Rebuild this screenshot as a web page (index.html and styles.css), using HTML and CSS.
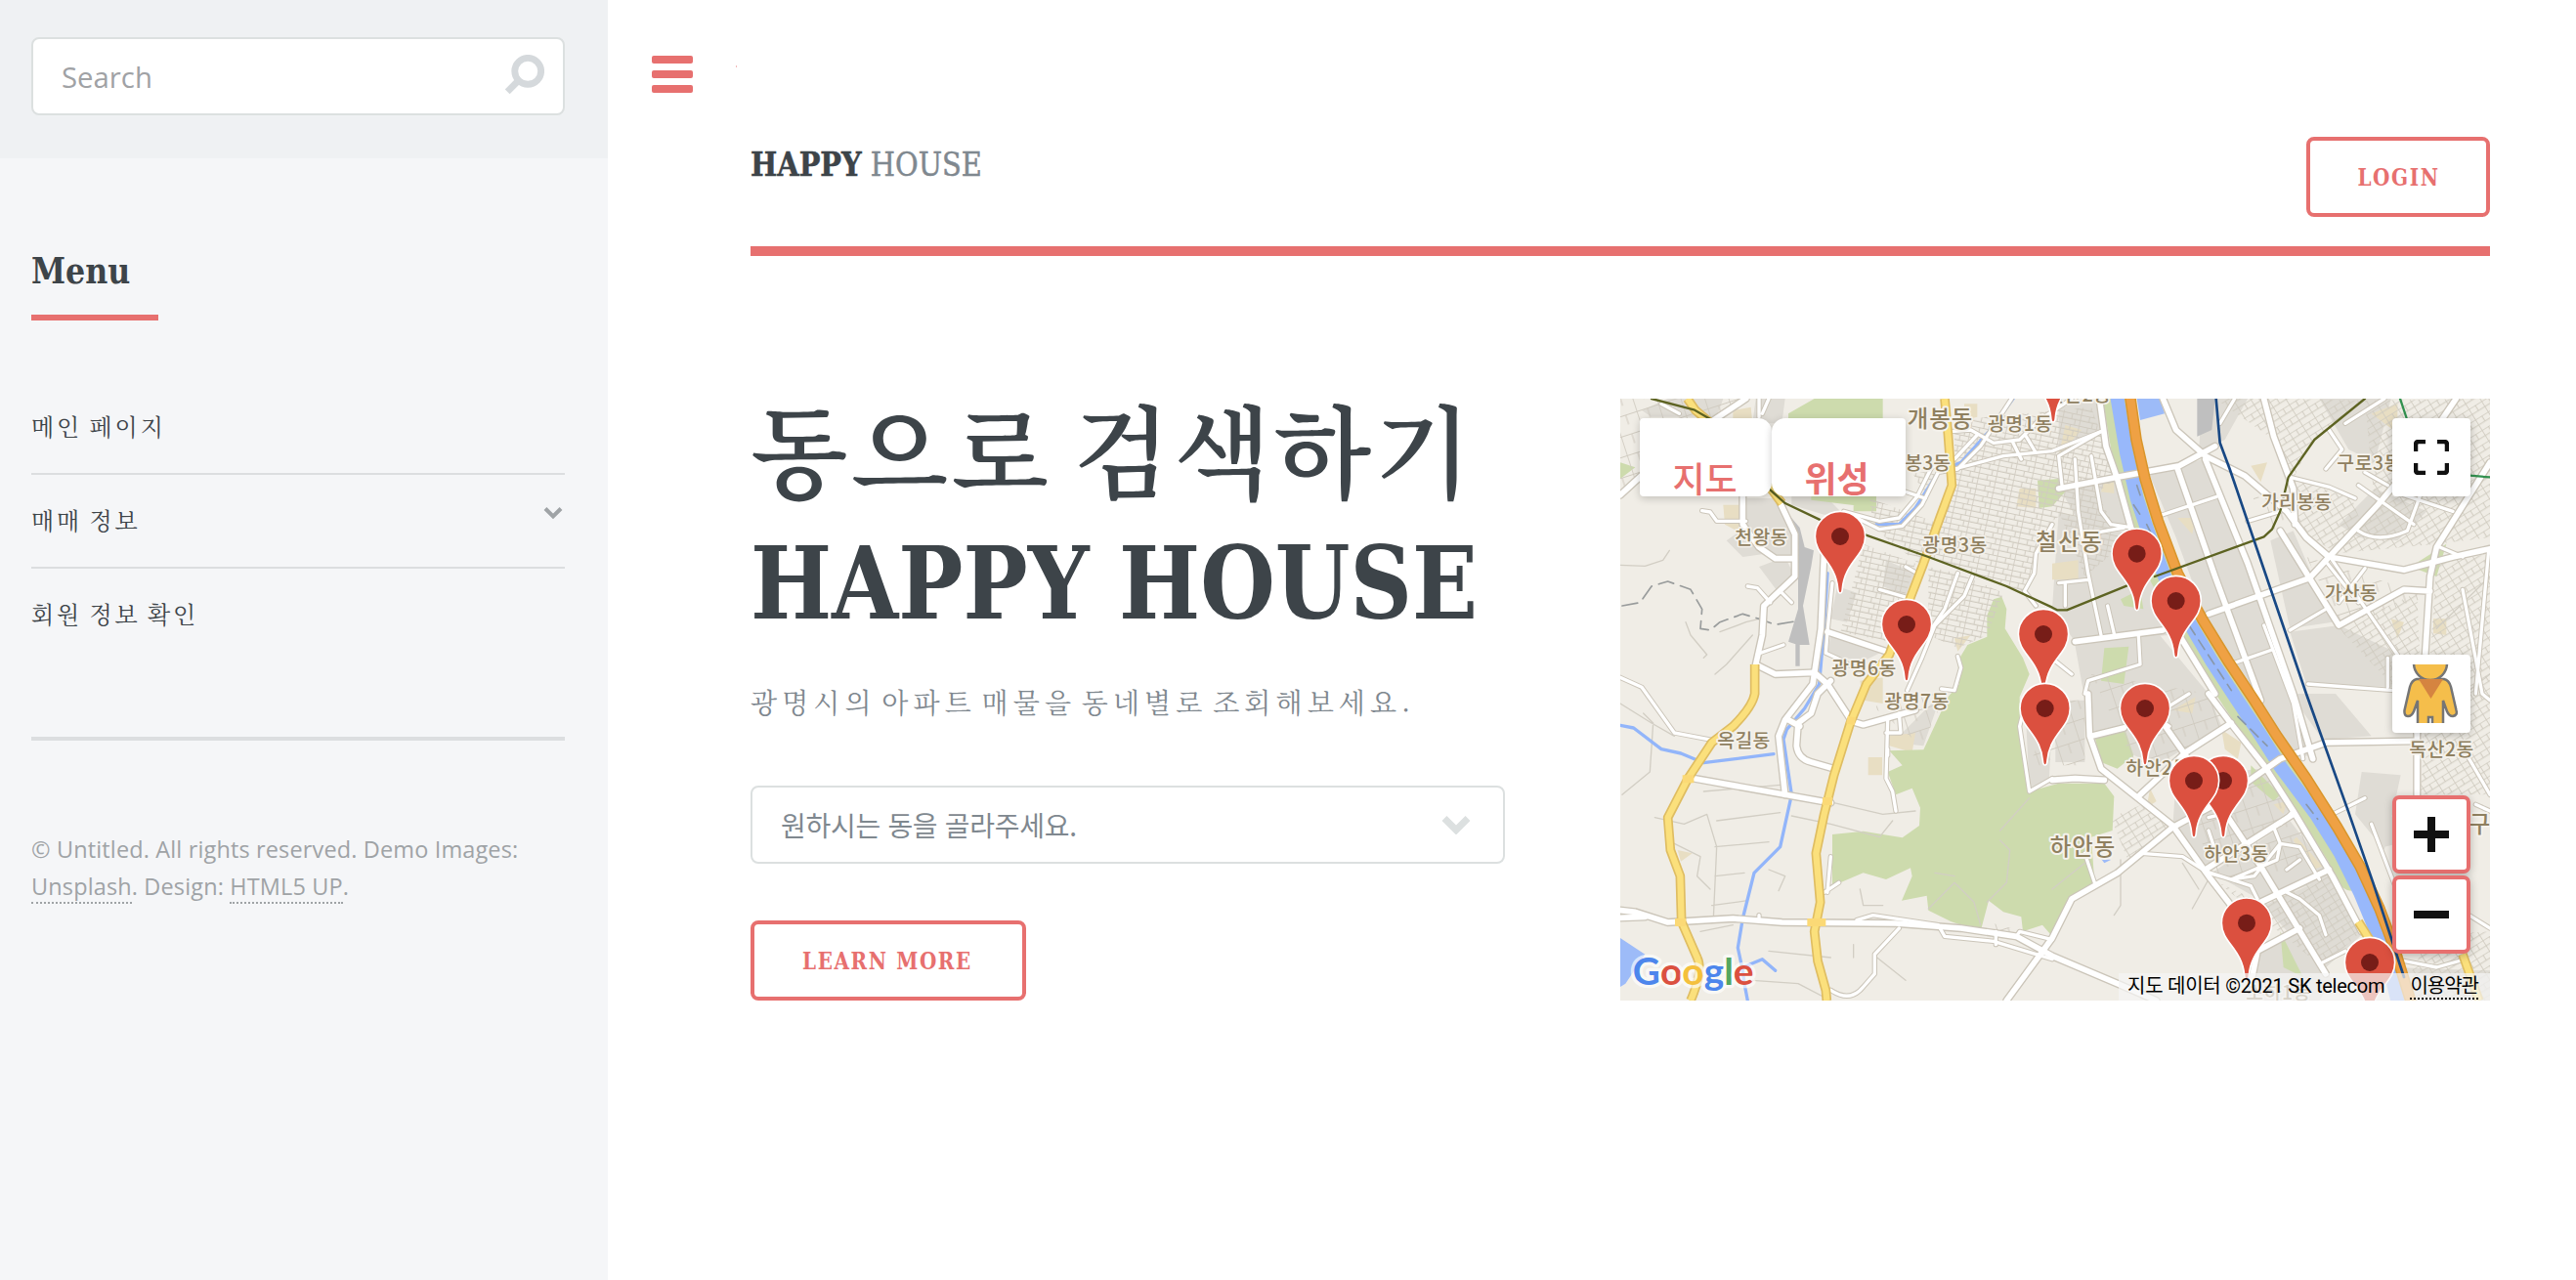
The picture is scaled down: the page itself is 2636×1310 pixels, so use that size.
FILE: index.html
```html
<!DOCTYPE html>
<html lang="ko">
<head>
<meta charset="utf-8">
<title>HAPPY HOUSE</title>
<link rel="stylesheet" href="styles.css">
</head>
<body>
<aside class="sidebar">
  <section class="search">
    <div class="search-box">
      <span>Search</span>
      <svg class="search-icon" viewBox="0 0 40 40"><circle cx="24" cy="16" r="12.8"/><path d="M15 25 4 36"/></svg>
    </div>
  </section>
  <nav class="menu">
    <h2><span class="fit fit-menu">Menu</span></h2>
    <ul>
      <li>메인 페이지</li>
      <li>매매 정보<svg class="chevron" viewBox="0 0 20 13"><path d="M2 2l8 8 8-8"/></svg></li>
      <li>회원 정보 확인</li>
    </ul>
  </nav>
  <footer>© Untitled. All rights reserved. Demo Images: <a>Unsplash</a>. Design: <a>HTML5 UP</a>.</footer>
</aside>
<main class="main">
  <div class="toggle"><i></i><i></i><i></i></div>
  <span class="speck"></span>
  <header class="header">
    <div class="logo"><span class="fit fit-logo"><strong>HAPPY</strong> HOUSE</span></div>
    <a class="button login"><span class="fit">LOGIN</span></a>
  </header>
  <section class="banner">
    <div class="content">
      <h1><span class="title-ko">동으로 검색하기</span><span class="fit title-en">HAPPY HOUSE</span></h1>
      <p>광명시의 아파트 매물을 동네별로 조회해보세요.</p>
      <div class="select"><span>원하시는 동을 골라주세요.</span><svg class="select-arrow" viewBox="0 0 30 20"><path d="M3 3.500l12 12 12-12"/></svg></div>
      <a class="button learn"><span class="fit">LEARN MORE</span></a>
    </div>
    <div class="map">
      <svg class="map-art" viewBox="54 54 2670 1848" preserveAspectRatio="none">
        <defs>
          <pattern id="streets-a" width="54" height="34" patternUnits="userSpaceOnUse" patternTransform="rotate(12)"><path d="M0 1H54M1 0V34M28 0V17M40 17V34M0 18H54"/></pattern>
          <pattern id="streets-b" width="46" height="38" patternUnits="userSpaceOnUse" patternTransform="rotate(-32)"><path d="M0 1H46M1 0V38M24 0V20M0 20H46"/></pattern>
          <pattern id="streets-c" width="70" height="60" patternUnits="userSpaceOnUse" patternTransform="rotate(-18)"><path d="M0 1H70M1 0V60M35 0V30"/></pattern>
          <g id="roads-major">
            <path d="M54 350 130 280 250 180 440 54M430 350V440L480 510 530 545H590M545 375 590 470V600L495 690 490 780 470 870 530 900 650 895 690 930 765 1045 800 1055 960 1010"/>
            <path d="M680 520 670 760 645 930 560 1040 540 1090 560 1270M690 770 870 830M600 1050 640 1020 660 960 700 920M600 1050 595 1120 Q600 1160 640 1170L710 1190M570 1040 605 1060"/>
            <path d="M280 1220 560 1270 700 1295M54 1625 100 1630 200 1662 400 1650 550 1662 900 1665 1100 1680 1270 1705 1380 1765 1580 1850 1700 1902M1240 1902 1380 1710 1440 1590 1580 1510 1750 1370 1880 1300 2080 1160 2220 1110 2500 1105M54 1648 130 1645"/>
            <path d="M1490 960 1495 1090 1530 1190 1750 1365 1860 1520 1960 1650 1980 1760M1720 1050 1860 1250 2020 1490 2220 1820M1860 960 1920 1040 2030 1180 2120 1320 2240 1520 2330 1690M1380 1225 1450 1220 1540 1225M1500 1090 1600 1065M1650 1270 1790 1140 1930 1050"/>
            <path d="M1850 1500 2120 1330M2020 1600 2230 1500M1950 1690 1990 1750M1990 1850 2010 1750 2140 1680M2500 1080 2500 1270"/>
            <path d="M1525 54 1545 200 1580 300 1630 480M1400 330 1580 295 1770 260 1880 200M1720 54 1760 150 1850 230 1970 290 2100 400 2160 480 2230 540 2460 580 2610 540 2724 515M2030 54 2060 170 2120 330 2125 440"/>
            <path d="M1850 240 1980 560 2120 960 2180 1160M1765 270 1880 600 2020 980M1860 715 2170 605 2230 540 2380 380 2480 260 2620 54M2080 460 2260 750 2460 640 2540 645M2560 510 2540 600 2525 840 2500 1080M2560 510 2724 250M1450 800 1720 765M1770 780 1880 960"/>
          </g>
          <g id="roads-minor">
            <path d="M305 398 330 402 350 430H440M705 620 690 770 685 835 740 860 800 900M445 630 475 635 515 680M550 650 580 680M475 838 555 810M930 570 965 590M850 640 935 665"/>
            <path d="M760 410 850 455 920 445 980 380 1030 280 1090 270 1160 200 1255 54M740 400 850 430 910 420 965 355 1010 265 1080 240 1150 165M1080 270 1230 230 1380 215 1530 155M1070 155 1130 150 1200 190 1280 180 1340 120 1440 54M1260 190 1285 240M1300 170 1330 220"/>
            <path d="M1380 440 1330 530 1325 590 1295 645 1330 690M1090 590 1050 700 1010 760M1135 600 1110 660 1020 750 980 850 935 950M54 910 120 940 220 1080 340 1103M1090 845 1100 880 1080 950 1040 945M875 1040 870 1220 890 1260 900 1320M910 1020 915 1080H870M875 1130V1150"/>
            <path d="M700 1460 690 1570M680 1570 725 1540M700 1870Q760 1910 800 1860L835 1820V1760L910 1680M780 1655 830 1640 1030 1670 1050 1705 1200 1720 1380 1775M1207 1690V1730M1270 1705 1280 1690 1380 1715M480 1640V1655M1300 980 1280 1060 1310 1260 1380 1220M930 340 990 360M480 54V110M490 100 510 54M290 180 315 200M180 70 235 100"/>
            <path d="M1655 1450 1780 1460 1850 1505 1990 1550 2010 1590M1860 1510 1930 1530 2000 1520 2080 1420 2140 1430 2200 1530M2060 1370 2080 1420 2070 1470 1930 1530M1860 1380 1880 1440M1480 1450 1510 1540M2100 1570 2140 1590 2200 1640 2220 1700M2200 1790 2280 1750M1860 1340 1900 1330"/>
            <path d="M1400 230 1530 155M1400 230 1410 320M1450 240 1460 400 1490 590M1500 230 1530 400 1560 440M1490 590 1530 780M1400 620 1490 610M1420 620V690M1560 440 1625 450M1645 780 1650 870 1490 920 1480 960M1390 860 1440 900M1550 690 1570 775M1490 470 1600 450"/>
            <path d="M1720 410 1885 355M1940 865 2055 825M2110 765 2220 700M1980 430 2080 400M2110 295 2230 325 2310 360M2320 460Q2380 500 2470 460L2510 350M2320 320 2490 440M2225 560 2320 680M2240 550 2440 840M2260 680 2340 575M2165 930 2430 950M1940 54 1895 130M2230 150 2270 210 2220 270M2340 280 2410 320M2030 750 2120 990 2150 1160M2280 130 2400 54M2430 340 2610 400M2570 510 2640 540M2410 850V940M2640 640 2700 960 2724 980M2660 1160 2724 1270M2720 520 2700 740 2680 960"/>
            <path d="M2340 1280 2280 1310 2240 1330M2360 1360 2440 1570M2660 1640 2724 1680M2460 1780 2560 1800 2630 1780M2680 1300 2724 1320M2080 1360 2120 1320M1800 960 1720 1010M1710 1040 1740 1060M2100 1500 2140 1470"/>
          </g>
          <g id="roads-yellow">
            <path d="M260 54 285 90 345 140 520 335 550 375M1050 54 1060 160 1072 320 1035 420 985 560 935 690 880 840 810 930 785 990 760 1050 710 1210 680 1330 655 1450 668 1600 650 1690 660 1780 685 1870 688 1902"/>
            <path d="M467 870V960Q460 1000 400 1060L335 1110 262 1220 200 1340 208 1440 238 1520 242 1660 290 1770Q310 1810 270 1902M2640 1760 2690 1902M2320 1660 2370 1740"/>
          </g>
          <g id="pin"><path d="M0 174Q-6 174-7 160C-14 78-77 60-77 0A77 77 0 0 1 77 0C77 60 14 78 7 160Q6 174 0 174Z"/><circle r="27"/></g>
        </defs>
        <rect class="land" x="54" y="54" width="2670" height="1848"/>
        <g class="urban">
          <path d="M120 90 200 54H370L350 110H150ZM470 54H560L550 130H460ZM430 360H540L590 480V560L520 530 440 440ZM480 570 560 540 590 600 540 650ZM380 490 450 440 500 530 430 540ZM870 550 960 590 930 660 860 630ZM720 630 780 650 750 740 700 730ZM700 780 860 830 800 860 690 840ZM580 340 700 370 740 410H680L580 380Z"/>
          <path d="M1400 400 1620 470 1700 600 1740 780 1450 800 1380 700ZM1450 810 1710 780 1860 960 1900 1060 1700 1180 1500 1090ZM1390 980H1480V1170H1390ZM1300 1050H1380L1370 1230 1310 1250ZM1680 290 1840 240 1990 560 2170 1150 2080 1160 1900 860 1760 480ZM2050 490 2120 460 2240 740 2110 760ZM2110 770 2260 750 2450 840 2430 940 2160 930ZM2200 54H2420L2370 250 2290 210ZM2260 440 2370 330 2530 400 2440 490 2320 480ZM2110 960H2250L2360 1090 2210 1100Z"/>
          <path d="M1760 1220 2020 1190 2110 1320 1850 1490 1750 1370ZM1870 1510 2110 1350 2240 1520 2030 1600 1960 1560ZM2030 1610 2230 1520 2330 1700 2210 1810ZM1990 1760 2150 1690 2240 1840 2200 1902H1980ZM2330 1200 2450 1210 2400 1440 2310 1330ZM2390 1340 2520 1330V1400L2400 1430ZM1000 1000 1040 960 985 1120 890 1110ZM1840 54H1980L1910 180 1830 220ZM2420 1800 2724 1810V1902H2480ZM1400 80 1530 54V150L1400 220ZM1410 340 1580 300 1620 440 1480 470Z"/>
        </g>
        <g class="campus"><path d="M400 90 455 80 460 130 400 130ZM370 380H430V470L375 440ZM1110 70H1150V110L1110 120ZM1280 330 1330 330V390L1270 385ZM1080 790 1130 780 1090 830ZM790 920 860 910V990L800 980ZM815 1155H858V1210H815ZM875 1090 960 1080 950 1140 880 1120ZM230 1440 275 1450 240 1475ZM1420 135 1470 150 1400 230ZM1540 310H1570V345L1530 340ZM1990 260 2040 250 2020 310ZM2360 100 2440 70V160ZM1765 420 1820 420 1810 470ZM1380 560 1460 550V610H1380ZM2420 730 2460 740 2440 790ZM2550 730H2590V780L2550 775ZM1900 1070 1960 1110 1950 1160 1910 1130ZM2130 1400 2210 1490 2180 1500 2120 1410ZM1680 1250 1700 1290 1670 1310ZM1750 1010 1820 970 1810 1020ZM2060 1300 2100 1290 2090 1330Z"/></g>
        <g class="parks">
          <path d="M1225 662 1240 700 1235 760 1290 850 1310 900 1280 970 1280 1080 1310 1260 1400 1235H1540L1570 1275 1565 1380 1500 1400 1510 1540 1440 1600 1380 1705 1350 1670 1290 1690 1285 1645 1230 1630 1185 1595 1160 1690 1070 1660 1000 1625 995 1580 918 1595 950 1520 945 1495 870 1530 800 1510 705 1550V1392L800 1382 920 1402 972 1365 975 1310 950 1250 900 1270 875 1200 920 1180 880 1135 985 1132 1060 970 1095 930 1090 860 1120 810 1180 785 1180 720 1200 670Z"/>
          <path d="M570 100 650 54H860V115H570ZM640 345H800V385L640 365ZM770 350H840V400H770ZM1335 305 1400 300 1420 340 1380 385 1340 390ZM54 250 100 265 54 300ZM1540 820 1615 815 1600 930 1530 920ZM1510 1090 1600 1060 1630 1150 1580 1190 1530 1170ZM1590 670 1650 640 1660 700 1600 690ZM1990 1180 2080 1270 2060 1290 1990 1230ZM2080 1690 2150 1830 2090 1800ZM2480 570 2590 500 2560 600Z"/>
        </g>
        <path class="hatch-a" d="M820 360 1040 440 970 560 830 450ZM1080 120 1500 80 1580 300 1380 430 1290 650 1000 540 1080 300ZM1000 570 1090 590 1230 650 1180 780 1090 820 1000 780ZM800 500 960 560 880 800 730 770ZM1440 200 1600 500 1480 600 1400 400ZM950 280 1030 280 990 350Z"/>
        <path class="hatch-b" d="M1880 54 2100 54 2340 60 2180 180 2120 300 2060 180ZM2120 300 2300 360 2330 440 2240 520 2140 460ZM2340 60 2724 54V480L2560 500 2240 530 2370 380ZM2260 760 2500 650 2520 1100 2430 940ZM2560 560 2724 530V1270L2510 1270ZM1560 1340 1680 1290 1740 1370 1620 1490ZM1890 1540 2210 1800 2340 1680 2230 1500 2020 1600ZM2540 1700 2724 1690V1902H2440Z"/>
        <path class="hatch-c" d="M54 54H430L54 340ZM830 1000 1060 950 980 1120ZM1390 980H1480V1180H1310ZM1500 900 1860 960 1930 1060 1650 1210ZM1780 1250 2080 1190 2210 1490 1880 1530ZM1990 340 2110 420 2040 470ZM2160 540 2540 660 2270 750ZM1180 1660 1290 1690 1270 1710 1180 1700Z"/>
        <g class="tracks">
          <path d="M54 565 130 568 185 550 205 520M255 740 270 780 320 840 310 850M360 770 440 740 480 730M345 900 380 870 460 780M54 990 150 1050 220 1090M125 1020 155 1050 145 1200 60 1270M160 1340 250 1360 320 1330 350 1430 340 1650M310 1260 545 1240M350 1350 545 1325M345 1430 510 1415M345 1520 435 1510M335 1610 445 1595M300 1690 400 1670M710 1295 860 1330 960 1320M580 1335 700 1360 850 1400 890 1350M510 1500 560 1520 540 1565M220 1420 300 1460 290 1520 330 1560M790 1560 800 1610 860 1610M510 1750 700 1770M770 1730V1770M830 1760 930 1840M1000 1620 1080 1540 1140 1600 1160 1670M1020 1510 1080 1520M1180 1600 1240 1540 1250 1440 1220 1410M1310 1280 1220 1380M460 1840 600 1850 700 1902M1590 1470V1610L1570 1640M1780 1480 1830 1560M1860 1530 1810 1620M1380 1560 1480 1480M2560 760 2724 600M2520 1060 2724 900"/>
        </g>
        <path class="trail" d="M60 690 115 680 150 630 200 615 270 640 305 700 300 760 330 765 360 740 430 715 480 730 530 748 590 738"/>
        <path class="yard" d="M550 385 605 450 620 510 648 520 640 570 615 690 635 810H605V875H592V808L570 800 600 700 600 500ZM1825 54H1880L1870 150 1825 170Z"/>
        <path class="stream" d="M54 1057 95 1065 180 1130 240 1143 310 1172 525 1145M690 590 680 750 665 930 620 1005 565 1070 555 1100 580 1270 545 1430 465 1510 430 1650 415 1740 430 1810 435 1850 445 1902M1260 54 1190 150 1100 250 1030 280 960 390 910 440 840 440M430 1800 490 1775 530 1810"/>
        <path class="lake" d="M54 1710 130 1760 70 1850 54 1860ZM1640 54H1710L1725 100 1650 120ZM1525 1460 1560 1470 1540 1480Z"/>
        <path class="bank" d="M1580 54 1608 220 1640 360 1680 480 1725 600 1800 740 1870 860 1945 975 2015 1080 2085 1190 2190 1330 2265 1450 2300 1520"/>
        <path class="river" d="M1580 54 1608 220 1640 360 1680 480 1725 600 1800 740 1870 860 1945 975 2015 1080 2085 1190 2190 1330 2265 1450 2325 1570 2375 1690 2420 1820 2440 1902"/>
        <path class="river-mark" d="M1640 320 1650 350M1630 380 1650 410M1670 440 1690 480M1800 750 1930 950M1950 1030 1990 1070 2040 1120M2160 1300 2195 1345"/>
        <use href="#roads-minor" class="minor-casing"/><use href="#roads-major" class="major-casing"/>
        <use href="#roads-minor" class="minor-fill"/><use href="#roads-major" class="major-fill"/>
        <use href="#roads-yellow" class="yellow-casing"/><use href="#roads-yellow" class="yellow-fill"/>
        <path class="crossing" d="M245 1222H280M222 1662H255M628 1662H685M675 1290H705M750 1040 775 1045"/>
        <g class="highway"><path id="highway" d="M1620 54 1638 180 1665 300 1705 430 1765 590 1840 730 1920 860 2000 980 2070 1090 2160 1220 2255 1370 2325 1490 2385 1620 2430 1740 2480 1902"/><use href="#highway" class="highway-fill"/></g>
        <path class="line-olive" d="M150 54 280 88 345 125 515 335 560 375 665 425 800 470 1000 540 1240 630 1380 695 1395 703H1425L1610 628M1695 600 2030 478 2055 455 2080 400 2105 295 2185 180 2340 54"/>
        <path class="line-navy" d="M1883 54 1895 190 1925 270 2160 960 2285 1310 2365 1540 2460 1830"/>
        <path class="line-green" d="M2448 54 2470 120 2530 260Q2560 285 2724 295"/>
        <g class="district">
          <text x="935" y="142" textLength="200">개봉동</text><text x="1330" y="520" textLength="202">철산동</text><text x="1373" y="1455" textLength="200">하안동</text><text x="2660" y="1387">구</text>
        </g>
        <g class="area">
          <text x="1182" y="152" textLength="198">광명1동</text><text x="928" y="272" textLength="140">봉3동</text><text x="406" y="500" textLength="162">천왕동</text><text x="982" y="525" textLength="198">광명3동</text><text x="703" y="903" textLength="198">광명6동</text><text x="865" y="1005" textLength="198">광명7동</text><text x="352" y="1125" textLength="162">옥길동</text><text x="2022" y="393" textLength="216">가리봉동</text><text x="2254" y="272" textLength="198">구로3동</text><text x="2216" y="671" textLength="162">가산동</text><text x="1606" y="1210" textLength="198">하안2동</text><text x="1846" y="1472" textLength="198">하안3동</text><text x="2476" y="1152" textLength="198">독산2동</text><text x="1362" y="62" textLength="198">철산2동</text><text x="1975" y="1900" textLength="198">소하1동</text>
        </g>
        <g class="pins">
          <use href="#pin" x="1383" y="-48"/><use href="#pin" x="729" y="477"/><use href="#pin" x="1640" y="530"/><use href="#pin" x="1760" y="675"/><use href="#pin" x="933" y="747"/><use href="#pin" x="1353" y="777"/><use href="#pin" x="1358" y="1005"/><use href="#pin" x="1665" y="1005"/><use href="#pin" x="1905" y="1227"/><use href="#pin" x="1815" y="1227"/><use href="#pin" x="1977" y="1664"/><use href="#pin" x="2355" y="1785"/>
        </g>
        <text class="google" x="92" y="1853" textLength="372" lengthAdjust="spacingAndGlyphs"><tspan class="g-blue">G</tspan><tspan class="g-red">o</tspan><tspan class="g-yellow">o</tspan><tspan class="g-blue">g</tspan><tspan class="g-green">l</tspan><tspan class="g-red">e</tspan></text>
      </svg>
      <div class="map-types"><div>지도</div><div class="satellite">위성</div></div>
      <div class="control fullscreen"><svg viewBox="0 0 36 36" width="36" height="36"><path d="M2 12V5Q2 2 5 2H12M24 2H31Q34 2 34 5V12M34 24V31Q34 34 31 34H24M12 34H5Q2 34 2 31V24"/></svg></div>
      <div class="control pegman"><svg viewBox="0 0 56 60" width="56" height="60"><path class="peg-body" d="M14 15Q9 16 7 23L1.500 47Q1 53 5 53Q9 53 11 48L15 37V62H26V54H30V62H41V37L45 48Q47 53 51 53Q56 52 54.500 47L49 23Q47 16 42 15Z"/><circle class="peg-body" cx="28" cy="-1" r="17"/><path class="peg-scarf" d="M16 15H41L28.500 35Z"/></svg></div>
      <div class="control zoom-in"><svg viewBox="0 0 36 36" width="36" height="36"><path class="bar" d="M0 18H36M18 0V36"/></svg></div>
      <div class="control zoom-out"><svg viewBox="0 0 36 36" width="36" height="36"><path class="bar" d="M0 18H36"/></svg></div>
      <div class="attribution"><span>지도 데이터 ©2021 SK telecom</span><a>이용약관</a></div>
    </div>
  </section>
</main>
</body>
</html>
```
FILE: styles.css
```css
* { box-sizing: border-box; }
body {
  margin: 0;
  display: flex;
  width: 2636px;
  height: 1310px;
  overflow: hidden;
  background: #fff;
  color: #7f888f;
  font: 29.33px/1.65 "Open Sans", "Noto Sans CJK KR", sans-serif;
}
ul { list-style: none; margin: 0; padding: 0; }
h1, h2, p { margin: 0; }
.fit { display: inline-block; transform: scaleX(.952); transform-origin: 0 50%; white-space: nowrap; }

.sidebar { width: 622px; flex: none; background: #f5f6f8; }
.search { height: 162px; padding: 38px 44px 0 32px; background: #eff1f3; }
.search-box {
  height: 80px;
  padding: 2px 19px 0 29px;
  display: flex;
  align-items: center;
  justify-content: space-between;
  border: 2px solid #dce0e0;
  border-radius: 8px;
  background: #fff;
  color: #a0a2a5;
}
.search-icon { width: 42px; height: 42px; margin-bottom: 5px; fill: none; stroke: #d5d9dc; stroke-width: 6.5; }
.menu { margin: 0 44px 0 32px; height: 596px; padding-top: 84px; border-bottom: 4px solid #dcdee0; }
.menu h2 {
  width: 130px;
  height: 82px;
  border-bottom: 6px solid #e7706f;
  color: #3d4449;
  font: bold 37px/62px "Roboto Slab", "DejaVu Serif Condensed", "DejaVu Serif", serif;
}
.menu ul { margin-top: 60px; }
.menu li {
  height: 96px;
  display: flex;
  justify-content: space-between;
  padding: 28px 2px 0 0;
  font: 400 24px/40px "Noto Serif CJK KR", "Noto Sans CJK KR", serif;
  letter-spacing: 2.9px;
  word-spacing: -3px;
  color: #3d4449;
}
.menu li + li { border-top: 2px solid #dcdee0; padding-top: 26px; }
.chevron { width: 20px; height: 18px; margin-top: 4px; fill: none; stroke: #9fa3a6; stroke-width: 4; }
.sidebar footer {
  margin: 92px 44px 0 32px;
  font-size: 23.47px;
  line-height: 38px;
  letter-spacing: .15px;
  color: #9fa3a6;
}
.sidebar footer a { border-bottom: 2px dotted #9fa3a6; display: inline-block; line-height: 32px; }

.main { flex: 1; position: relative; padding: 140px 88px 0 146px; }
.toggle { position: absolute; left: 45px; top: 57px; display: grid; gap: 7px; }
.toggle i { width: 42px; height: 8px; border-radius: 2px; background: #e7706f; }
.speck { position: absolute; left: 131px; top: 67px; width: 1px; height: 2px; background: #f3b9b9; }
.header { display: flex; justify-content: space-between; height: 122px; border-bottom: 10px solid #e7706f; }
.logo { padding-top: 2px; font: 33.7px/52px "Roboto Slab", "DejaVu Serif Condensed", "DejaVu Serif", serif; -webkit-text-stroke: .5px; }
.logo strong { color: #3d4449; }
.button {
  display: flex;
  align-items: center;
  justify-content: center;
  height: 82px;
  padding-top: 3px;
  border: 4px solid #e7706f;
  border-radius: 8px;
  color: #e7706f;
  font: bold 23.47px/1 "Roboto Slab", "DejaVu Serif Condensed", "DejaVu Serif", serif;
  letter-spacing: 1.7px;
}
.button .fit { transform: scaleX(.945); transform-origin: 50% 50%; }
.login { width: 188px; }
.learn { width: 282px; margin-top: 58px; padding-right: 2px; }
.banner { display: flex; justify-content: space-between; margin-top: 146px; }
.content { width: 772px; }
h1 { color: #3d4449; font: bold 102.7px/133px "Roboto Slab", "DejaVu Serif Condensed", "DejaVu Serif", serif; }
h1 span { display: block; }
.title-ko { font: 600 103px/133px "Noto Serif CJK KR", "Noto Sans CJK KR", serif; white-space: nowrap; letter-spacing: 3.2px; word-spacing: -13px; margin-top: -17px; }
.title-en { margin-top: 7px; }
.content p { margin-top: 24px; font: 400 28px/60px "Noto Serif CJK KR", "Noto Sans CJK KR", serif; letter-spacing: 5.1px; word-spacing: -8px; white-space: nowrap; }
.select {
  display: flex;
  align-items: center;
  justify-content: space-between;
  height: 80px;
  margin-top: 56px;
  padding: 0 33px 0 29px;
  border: 2px solid #dce0e0;
  border-radius: 8px;
  font-family: "Noto Sans CJK KR", sans-serif;
  font-size: 28px;
  letter-spacing: -.3px;
}
.select-arrow { width: 30px; height: 20px; fill: none; stroke: #dce0e0; stroke-width: 7; }

.map { position: relative; width: 890px; height: 616px; overflow: hidden; font-family: Roboto, "Noto Sans CJK KR", sans-serif; }
.map-art { display: block; width: 890px; height: 616px; fill: none; stroke-linejoin: round; stroke-linecap: round; }
.land { fill: #f0ede6; }
.urban { fill: #dfdcd5; }
.campus { fill: #e8dec3; }
.parks { fill: #cddbad; }
pattern path { stroke: #d0cbc0; stroke-width: 3; }
.hatch-a { fill: url(#streets-a); }
.hatch-b { fill: url(#streets-b); }
.hatch-c { fill: url(#streets-c); }
.tracks { stroke: #d2cec4; stroke-width: 4; }
.trail { stroke: #999c9c; stroke-width: 5; stroke-dasharray: 48 22; }
.yard { fill: #bfbfbf; }
.stream { stroke: #92b5fa; stroke-width: 10; }
.lake { fill: #9dbbf8; }
.bank { stroke: #cddbad; stroke-width: 90; }
.river { stroke: #98b8fb; stroke-width: 42; }
.river-mark { stroke: #8998ab; stroke-width: 5; stroke-dasharray: 34 20; }
.major-casing { stroke: #cbc5b9; stroke-width: 25; }
.major-fill { stroke: #fff; stroke-width: 17; }
.minor-casing { stroke: #cbc5b9; stroke-width: 16; }
.minor-fill { stroke: #fff; stroke-width: 10; }
.yellow-casing { stroke: #dfbd62; stroke-width: 29; stroke-linecap: butt; }
.yellow-fill { stroke: #fbe07c; stroke-width: 19; stroke-linecap: butt; }
.crossing { stroke: #fbd976; stroke-width: 24; stroke-linecap: butt; }
.highway { stroke: #d9962c; stroke-width: 35; }
.highway-fill { stroke: #efa144; stroke-width: 26; }
.line-olive { stroke: #5d6322; stroke-width: 7; }
.line-navy { stroke: #184884; stroke-width: 8; }
.line-green { stroke: #32914f; stroke-width: 7; }
.district, .area { fill: #8f8060; stroke: #f5f2ec; stroke-width: 12; paint-order: stroke; font-family: "Noto Sans CJK KR", sans-serif; }
.district { font-size: 70px; font-weight: 500; }
.area { font-size: 58px; font-weight: 500; stroke-width: 10; }
#pin path { fill: #db503f; stroke: #fff; stroke-width: 5; }
#pin circle { fill: #771d18; stroke: none; }
.google { font: 700 114px Lato, sans-serif; stroke: rgba(255, 255, 255, .65); stroke-width: 20; paint-order: stroke; }
.g-blue { fill: #4d86ec; }
.g-red { fill: #db5040; }
.g-yellow { fill: #f4c03c; }
.g-green { fill: #54a660; }
.map-types { position: absolute; left: 20px; top: 20px; display: flex; width: 272px; height: 80px; color: #e7706f; font-size: 36px; font-weight: 500; line-height: 128px; text-align: center; }
.map-types div { flex: 1; background: #fff; border-radius: 4px 14px 14px 4px; box-shadow: 0 2px 8px rgba(0, 0, 0, .2); padding-right: 2px; overflow: hidden; }
.map-types .satellite { border-radius: 14px 4px 4px 14px; font-weight: 700; padding: 0 4px 0 0; }
.control { position: absolute; left: 790px; width: 80px; height: 80px; display: grid; place-items: center; background: #fff; border-radius: 4px; box-shadow: 0 2px 8px rgba(0, 0, 0, .25); fill: none; stroke: #111; stroke-width: 4.500; }
.fullscreen { top: 20px; }
.pegman { top: 262px; padding-right: 3px; }
.peg-body { fill: #f5be4b; stroke: #757575; stroke-width: 2.500; }
.peg-scarf { fill: #d58440; stroke: none; }
.zoom-in { top: 406px; }
.zoom-out { top: 488px; }
.zoom-in, .zoom-out { border: 4px solid #e7706f; border-radius: 7px; }
.bar { stroke-width: 8; }
.attribution { position: absolute; right: 0; bottom: 0; width: 380px; height: 28px; padding: 0 12px 0 9px; display: flex; justify-content: space-between; background: rgba(245, 245, 245, .7); color: #000; font-size: 20px; line-height: 26px; letter-spacing: -.25px; white-space: nowrap; }
.attribution a { border-bottom: 2px dotted #000; height: 27px; letter-spacing: -1px; }
```
